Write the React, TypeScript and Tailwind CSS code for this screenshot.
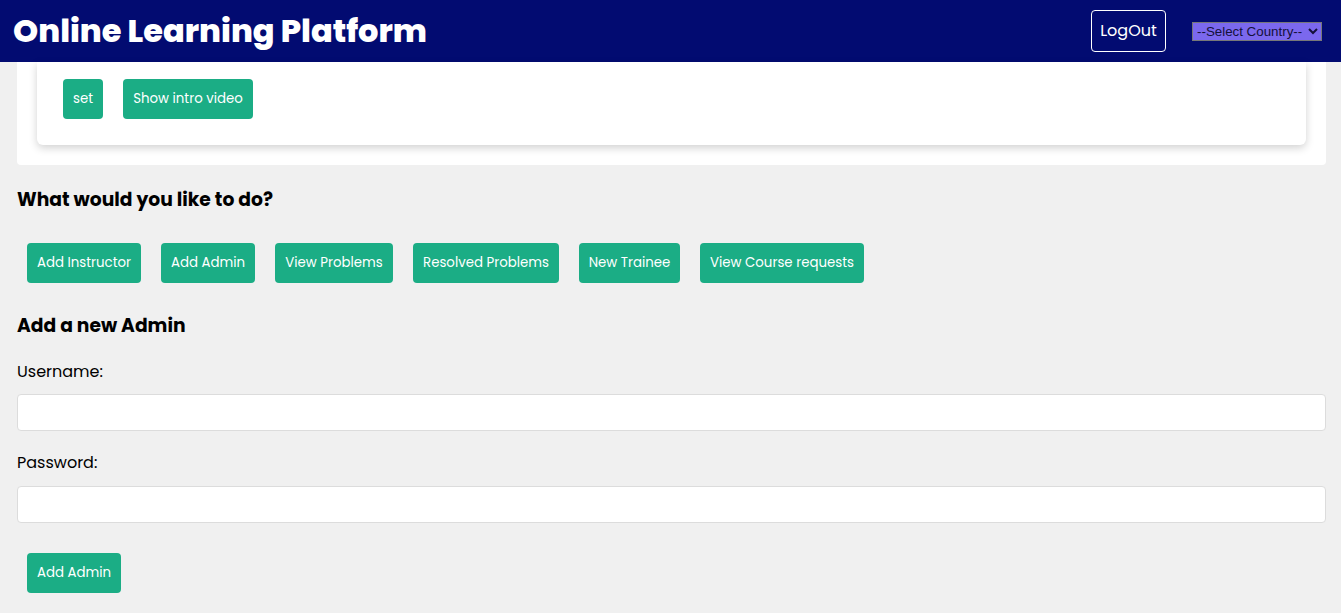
const font = { fontFamily: "Poppins, Inter, 'Noto Sans', sans-serif" };

const actions = [
  { label: "Add Instructor", w: "w-[114px]" },
  { label: "Add Admin", w: "w-[94px]" },
  { label: "View Problems", w: "w-[118px]" },
  { label: "Resolved Problems", w: "w-[146px]" },
  { label: "New Trainee", w: "w-[101px]" },
  { label: "View Course requests", w: "w-[164px]" },
];

function GreenButton({ children, className = "" }: { children: React.ReactNode; className?: string }) {
  return (
    <button
      className={`h-10 rounded-[4px] bg-[#1bad85] text-[13.333px] text-white whitespace-nowrap ${className}`}
    >
      {children}
    </button>
  );
}

export default function App() {
  return (
    <div className="min-h-[613px] bg-[#f0f0f0] text-black" style={font}>
      <header className="flex h-[62px] items-center bg-[#020b71] pl-[13px] pr-[19px]">
        <h1 className="flex-grow text-[32px] font-extrabold text-white">Online Learning Platform</h1>
        <button className="mr-[26px] h-[42px] w-[75px] rounded-[4px] border border-white text-[16px] text-white">
          LogOut
        </button>
        <select
          className="h-[19px] w-[130px] border border-[#777] bg-[#7b68ee] text-[13.333px] text-[#14103a]"
          style={{ fontFamily: "'Liberation Sans', Arial, sans-serif" }}
        >
          <option>--Select Country--</option>
        </select>
      </header>

      <div className="pl-[17px] pr-[15px]">
        <div className="rounded-b-[4px] bg-white px-5 pb-5">
          <div className="flex gap-5 rounded-b-[6px] bg-white pl-[26px] pt-[17px] pb-[26px] shadow-[0_3px_8px_rgba(0,0,0,0.18)]">
            <GreenButton className="w-10">set</GreenButton>
            <GreenButton className="w-[130px]">Show intro video</GreenButton>
          </div>
        </div>

        <h2 className="mt-[23px] text-[18.72px] font-bold leading-[24px]">What would you like to do?</h2>

        <div className="mt-[31px] flex gap-5 pl-[10px]">
          {actions.map((a) => (
            <GreenButton key={a.label} className={a.w}>
              {a.label}
            </GreenButton>
          ))}
        </div>

        <h2 className="mt-[31px] text-[18.72px] font-bold leading-[24px]">Add a new Admin</h2>

        <label className="mt-[22px] block text-[16px] leading-[24px]">Username:</label>
        <input className="mt-[10px] block h-[37px] w-full rounded-[4px] border border-[#dcdcdc] bg-white" />

        <label className="mt-[20px] block text-[16px] leading-[24px]">Password:</label>
        <input
          type="password"
          className="mt-[11px] block h-[37px] w-full rounded-[4px] border border-[#dcdcdc] bg-white"
        />

        <div className="mt-[30px] pl-[10px] pb-5">
          <GreenButton className="w-[94px]">Add Admin</GreenButton>
        </div>
      </div>
    </div>
  );
}
